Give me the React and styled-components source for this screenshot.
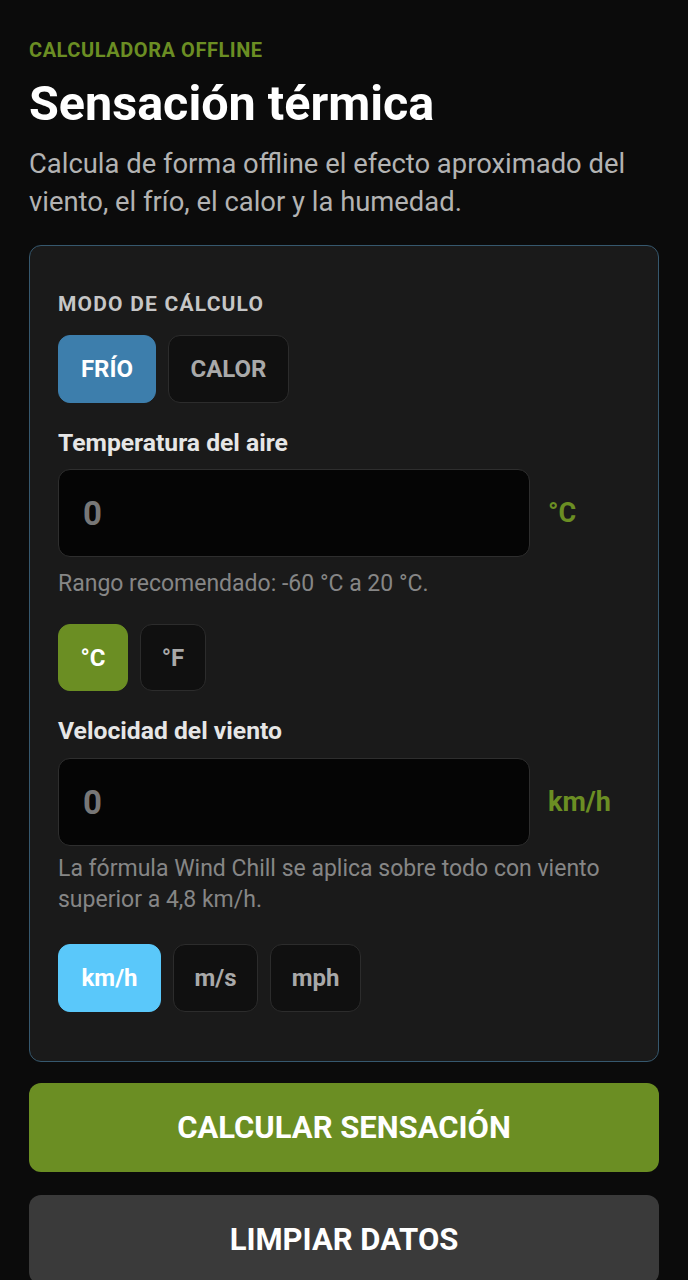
import React from "react";
import styled, { createGlobalStyle } from "styled-components";

const Global = createGlobalStyle`
  html, body { margin: 0; padding: 0; background: #0b0b0b; }
  body { font-family: Roboto, "Noto Sans", "Liberation Sans", sans-serif; color: #fff; }
  * { box-sizing: border-box; }
`;

const Page = styled.main`
  padding: 38px 29px 40px;
  display: flex;
  flex-direction: column;
`;

const Eyebrow = styled.div`
  font-size: 20px;
  font-weight: 700;
  line-height: 24px;
  color: #6b8e23;
  letter-spacing: 0.55px;
`;

const Title = styled.h1`
  margin: 14px 0 0;
  font-size: 48.5px;
  font-weight: 700;
  line-height: 56px;
  color: #ffffff;
`;

const Lead = styled.p`
  margin: 13px 0 0;
  font-size: 27.4px;
  line-height: 38px;
  color: #b3b3b3;
`;

const Card = styled.section`
  margin-top: 24px;
  background: #1a1a1a;
  border: 1px solid #36586e;
  border-radius: 12px;
  padding: 46px 28px 49px;
  display: flex;
  flex-direction: column;
`;

const SectionLabel = styled.div`
  font-size: 21px;
  font-weight: 700;
  line-height: 24px;
  letter-spacing: 1.2px;
  color: #c6c6c6;
`;

const FieldLabel = styled.div`
  margin-top: 26px;
  font-size: 24.7px;
  font-weight: 700;
  line-height: 28px;
  color: #e6e6e6;
`;

const Segments = styled.div`
  display: flex;
  gap: 12px;
  margin-top: ${(p) => p.$mt}px;
`;

const Seg = styled.button`
  height: ${(p) => p.$h || 68}px;
  width: ${(p) => p.$w}px;
  padding: 0;
  border-radius: 12px;
  font-family: inherit;
  font-size: 24px;
  font-weight: 700;
  border: 1px solid ${(p) => (p.$bg ? p.$bg : "#2c2c2c")};
  background: ${(p) => p.$bg || "#101010"};
  color: ${(p) => (p.$bg ? "#ffffff" : "#a9a9a9")};
  display: flex;
  align-items: center;
  justify-content: center;
`;

const InputRow = styled.div`
  margin-top: ${(p) => p.$mt}px;
  display: grid;
  grid-template-columns: 1fr 82px;
  column-gap: 18px;
  align-items: center;
`;

const Input = styled.div`
  height: 88px;
  background: #050505;
  border: 1px solid #2e2e2e;
  border-radius: 12px;
  padding: 0 24px;
  display: flex;
  align-items: center;
  font-size: 33px;
  font-weight: 700;
  color: #777777;
`;

const Unit = styled.div`
  font-size: 27px;
  font-weight: 700;
  color: #6b8e23;
`;

const Help = styled.p`
  margin: ${(p) => p.$mt}px 0 0;
  font-size: 23px;
  line-height: 31px;
  color: #868686;
`;

const Action = styled.button`
  margin-top: ${(p) => p.$mt}px;
  height: 89px;
  border: none;
  border-radius: 12px;
  background: ${(p) => p.$bg};
  color: #fff;
  font-family: inherit;
  font-size: 31px;
  font-weight: 700;
`;

export default function App() {
  return (
    <>
      <Global />
      <Page>
        <Eyebrow>CALCULADORA OFFLINE</Eyebrow>
        <Title>Sensación térmica</Title>
        <Lead>Calcula de forma offline el efecto aproximado del viento, el frío, el calor y la humedad.</Lead>
        <Card>
          <SectionLabel>MODO DE CÁLCULO</SectionLabel>
          <Segments $mt={19}>
            <Seg $bg="#3d7eac" $w={98}>FRÍO</Seg>
            <Seg $w={121}>CALOR</Seg>
          </Segments>
          <FieldLabel>Temperatura del aire</FieldLabel>
          <InputRow $mt={12}>
            <Input>0</Input>
            <Unit>°C</Unit>
          </InputRow>
          <Help $mt={11}>Rango recomendado: -60 °C a 20 °C.</Help>
          <Segments $mt={25}>
            <Seg $bg="#6b8e23" $w={70} $h={67}>°C</Seg>
            <Seg $w={66} $h={67}>°F</Seg>
          </Segments>
          <FieldLabel>Velocidad del viento</FieldLabel>
          <InputRow $mt={13}>
            <Input>0</Input>
            <Unit>km/h</Unit>
          </InputRow>
          <Help $mt={7}>La fórmula Wind Chill se aplica sobre todo con viento superior a 4,8 km/h.</Help>
          <Segments $mt={29}>
            <Seg $bg="#5ac8fa" $w={103}>km/h</Seg>
            <Seg $w={85}>m/s</Seg>
            <Seg $w={91}>mph</Seg>
          </Segments>
        </Card>
        <Action $mt={21} $bg="#6b8e23">CALCULAR SENSACIÓN</Action>
        <Action $mt={23} $bg="#3a3a3a">LIMPIAR DATOS</Action>
      </Page>
    </>
  );
}
